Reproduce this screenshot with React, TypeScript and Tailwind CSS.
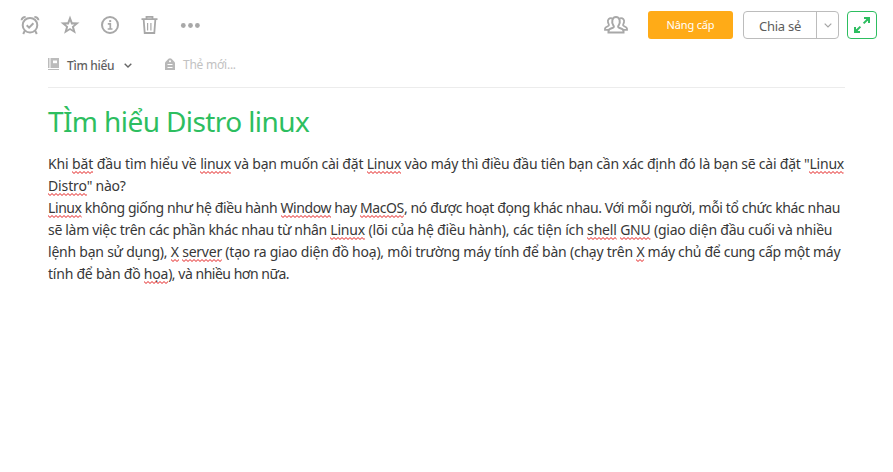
type Segment = { text: string; fit: string; marked?: boolean };

const a = "tracking-[-0.12px]";
const b = "tracking-[-0.23px]";
const c = "tracking-[-0.37px]";
const d = "tracking-[-0.31px]";
const e = "tracking-[-0.17px]";
const f = "tracking-[-0.48px]";
const g = "tracking-[-0.41px]";

const lines: Segment[][] = [
  [
    { text: "Khi ", fit: a },
    { text: "băt", fit: a, marked: true },
    { text: " đầu tìm hiểu về ", fit: a },
    { text: "linux", fit: b, marked: true },
    { text: " và bạn muốn cài đặt ", fit: b },
    { text: "Linux", fit: b, marked: true },
    { text: ' vào máy thì điều đầu tiên bạn cần xác định đó là bạn sẽ cài đặt "', fit: b },
    { text: "Linux", fit: b, marked: true },
  ],
  [
    { text: "Distro", fit: a, marked: true },
    { text: '" nào?', fit: d },
  ],
  [
    { text: "Linux", fit: g, marked: true },
    { text: " không giống như hệ điều hành ", fit: g },
    { text: "Window", fit: g, marked: true },
    { text: " hay ", fit: g },
    { text: "MacOS", fit: g, marked: true },
    { text: ", nó được hoạt đọng khác nhau. Với mỗi người, mỗi tổ chức khác nhau", fit: c },
  ],
  [
    { text: "sẽ làm việc trên các phần khác nhau từ nhân ", fit: d },
    { text: "Linux", fit: e, marked: true },
    { text: " (lõi của hệ điều hành), các tiện ích ", fit: e },
    { text: "shell", fit: e, marked: true },
    { text: " ", fit: b },
    { text: "GNU", fit: b, marked: true },
    { text: " (giao diện đầu cuối và nhiều", fit: b },
  ],
  [
    { text: "lệnh bạn sử dụng), ", fit: b },
    { text: "X", fit: b, marked: true },
    { text: " ", fit: b },
    { text: "server", fit: b, marked: true },
    { text: " (tạo ra giao diện đồ hoạ), môi trường máy tính để bàn (chạy trên ", fit: b },
    { text: "X", fit: d, marked: true },
    { text: " máy chủ để cung cấp một máy", fit: d },
  ],
  [
    { text: "tính để bàn đồ ", fit: b },
    { text: "họa", fit: b, marked: true },
    { text: "), và nhiều hơn nữa.", fit: f },
  ],
];

/* A run of text; misspelled words carry the spell checker's red squiggle. */
function Run({ text, fit, marked }: Segment) {
  if (!marked) return <span className={fit}>{text}</span>;
  return (
    <span className={"relative " + fit}>
      {text}
      <svg className="absolute left-0 bottom-[-1px] h-[3px] w-full" aria-hidden="true">
        <rect width="100%" height="3" fill="url(#squiggle)" />
      </svg>
    </span>
  );
}

function Toolbar() {
  return (
    <header className="flex h-[50px] items-center pl-5 pr-4 text-[#a8a8a8]">
      <div className="flex items-center gap-5">
        <svg className="size-5" viewBox="0 0 20 20" fill="none" stroke="currentColor" strokeWidth="2">
          <circle cx="10" cy="10.200" r="7.300" />
          <path d="M6.700 10.300l2.400 2.300 4.300-4.400M4.700 16l-1.500 3M15.300 16l1.500 3" />
          <path d="M1.600 5.300c0-2 1.800-3.400 4-3.300M18.400 5.300c0-2-1.800-3.400-4-3.300" />
        </svg>
        <svg className="size-5" viewBox="0 0 20 20" fill="currentColor" fillRule="evenodd">
          <path d="M10 .6l2.500 6.600 7 .3-5.500 4.400 1.900 6.900L10 14.900l-5.900 3.900L6 11.900.5 7.500l7-.3zM10 6.200L8.800 9.400l-3.200.2 2.600 2-.9 3.100 2.700-1.800 2.700 1.800-.9-3.100 2.600-2-3.200-.2z" />
        </svg>
        <svg className="size-5" viewBox="0 0 20 20" fill="none" stroke="currentColor" strokeWidth="2">
          <circle cx="10" cy="10" r="8" />
          <path d="M7.800 8.800h2.500v5M7.700 14h4.800" strokeWidth="1.700" />
          <path d="M9.200 6.100h2" />
        </svg>
        <svg className="size-5" viewBox="0 0 20 20" fill="none" stroke="currentColor" strokeWidth="1.800">
          <path d="M1.500 4.200h16M6.500 3.500V1.900h6v1.600M3.700 5l1 13h9.600l1-13" />
          <path d="M7.600 8v7.500M10.900 8v7.500" strokeWidth="1.200" />
        </svg>
        <svg className="size-5" viewBox="0 0 20 20" fill="currentColor">
          <circle cx="3.300" cy="10.500" r="2.400" />
          <circle cx="10.500" cy="10.500" r="2.400" />
          <circle cx="17.400" cy="10.500" r="2.400" />
        </svg>
      </div>
      <svg className="ml-auto h-5 w-6" viewBox="0 0 24 20" fill="none" stroke="currentColor" strokeWidth="2">
        <path d="M9.400 12.500c.8-.6.400-1.500-.2-2.400C7.500 7.200 7.800 2 12 2s4.500 5.200 2.800 8.100c-.6.900-1 1.800-.2 2.400 1.600 1 4.900 1 4.900 3.500v1.500h-15V16c0-2.500 3.300-2.500 4.900-3.500z" />
        <path d="M8 3.300C5 2.600 3.400 4.900 4 7.300c.3 1.500 1.400 2.400.8 3.300-.7 1-3.700 1-3.800 3v1.200h4M16 3.300c3-.7 4.600 1.600 4 4-.3 1.500-1.400 2.400-.8 3.300.7 1 3.700 1 3.800 3v1.200h-4" strokeWidth="1.800" />
      </svg>
      <button className="ml-5 h-7 w-[85px] rounded-[3px] bg-[#ffab17] text-[11px] tracking-[-0.15px] text-white">Nâng cấp</button>
      <div className="ml-[10px] flex h-7 w-24 rounded-[4px] border border-[#bcbcbc] text-[#5c5c5c]">
        <button className="w-[73px] border-r border-[#bcbcbc] pt-0.5 text-[13px] leading-none tracking-[-0.25px]">Chia sẻ</button>
        <button className="flex flex-1 items-center justify-center">
          <svg className="h-[5px] w-2" viewBox="0 0 8 5" fill="none" stroke="#a5a5a5" strokeWidth="1.200"><path d="M.7.7L4 4 7.300.7" /></svg>
        </button>
      </div>
      <button className="ml-2 flex h-7 w-[30px] items-center justify-center rounded-[4px] border border-[#2dbe60] text-[#2dbe60]">
        <svg className="size-4" viewBox="0 0 16 16" fill="none" stroke="currentColor" strokeWidth="2">
          <path d="M10 1h5v5M14.800 1.200L9.600 6.400M1 10v5h5M1.200 14.800l5.200-5.200" />
          <path d="M12 1.500h2.500V4zM1.500 12v2.500H4z" fill="currentColor" strokeWidth="1" />
        </svg>
      </button>
    </header>
  );
}

export default function App() {
  return (
    <main className="h-[472px] w-[893px] overflow-hidden bg-white font-['Noto_Sans',sans-serif]">
      <svg className="absolute size-0" aria-hidden="true">
        <defs>
          <pattern id="squiggle" width="4" height="3" patternUnits="userSpaceOnUse">
            <path d="M-1 1.500L0 .5l2 2 2-2 1 1" fill="none" stroke="#e00000" strokeWidth="0.900" />
          </pattern>
        </defs>
      </svg>
      <Toolbar />
      <div className="mx-12 flex h-[38px] w-[797px] items-center border-b border-[#ececec] pb-[7px] text-[12px]">
        <svg className="mb-0.5 h-3 w-[11px]" viewBox="0 0 11 12" fill="#bcbcbc">
          <path d="M0 0h1.500v10H0zM2.500 0H11v10H2.500zM0 11h11v1H0z" />
          <path d="M5 2.500h4v2.700H5z" fill="#fff" />
        </svg>
        <span className="ml-2 w-[48px] pt-px font-medium tracking-[-0.3px] whitespace-nowrap text-[#5f5f5f]">Tìm hiểu</span>
        <svg className="mt-px ml-[9px] h-[5px] w-2" viewBox="0 0 8 5" fill="none" stroke="#666" strokeWidth="1.400"><path d="M.7.7L4 4 7.300.7" /></svg>
        <svg className="mb-[3px] ml-[33px] h-3 w-[10px]" viewBox="0 0 10 12">
          <path d="M0 4.500L3.500.8Q5-.4 6.500.8L10 4.500V12H0z" fill="#b8b8b8" />
          <path d="M2.500 6.500h5M2.500 9.500h5" stroke="#fff" />
          <circle cx="5" cy="3.300" r="1" fill="#fff" />
        </svg>
        <span className="ml-2 tracking-[-0.25px] text-[#c2c2c2]">Thẻ mới...</span>
      </div>
      <article className="ml-12 pt-[13px]">
        <h1 className="h-10 text-[28px] leading-10 tracking-[-0.6px] whitespace-nowrap text-[#2dbe60]">TÌm hiểu Distro linux</h1>
        <div className="pt-3 text-[14px] text-[#383838]">
          {lines.map((line, i) => (
            <p key={i} className="h-[22px] leading-[22px] whitespace-pre">
              {line.map((segment, j) => <Run key={j} {...segment} />)}
            </p>
          ))}
        </div>
      </article>
    </main>
  );
}
